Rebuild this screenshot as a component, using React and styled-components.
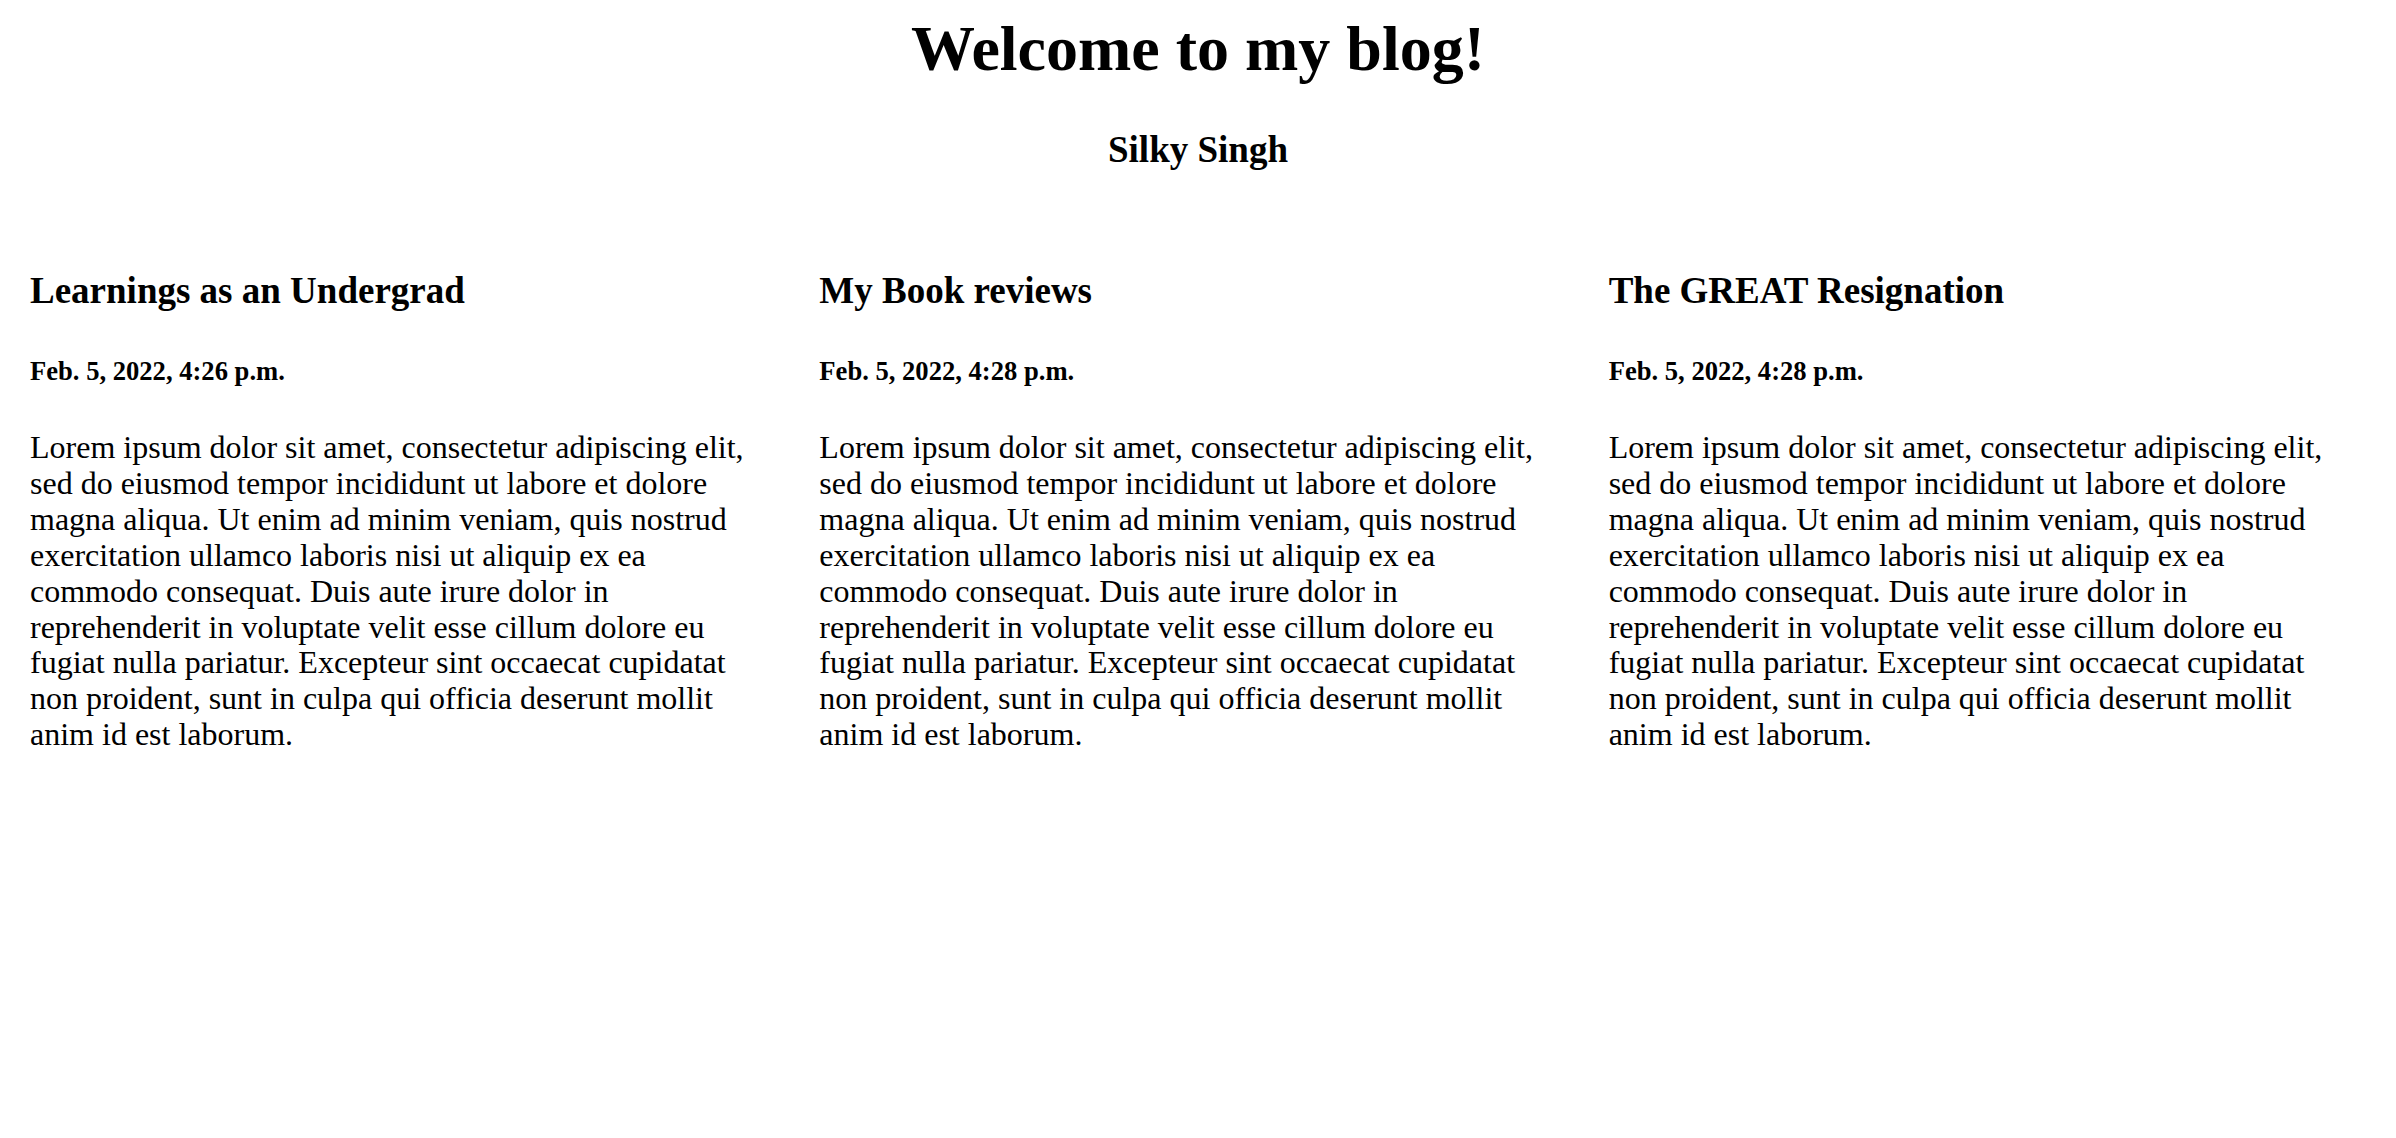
import React from 'react'
import styled, { createGlobalStyle } from 'styled-components'

const GlobalStyle = createGlobalStyle`
  html, body {
    margin: 0;
    padding: 0;
    background: #ffffff;
  }
  body {
    font-family: "Liberation Serif", "Times New Roman", serif;
    color: #000000;
  }
`

const lorem =
  'Lorem ipsum dolor sit amet, consectetur adipiscing elit, sed do eiusmod tempor incididunt ut labore et dolore magna aliqua. Ut enim ad minim veniam, quis nostrud exercitation ullamco laboris nisi ut aliquip ex ea commodo consequat. Duis aute irure dolor in reprehenderit in voluptate velit esse cillum dolore eu fugiat nulla pariatur. Excepteur sint occaecat cupidatat non proident, sunt in culpa qui officia deserunt mollit anim id est laborum.'

const posts = [
  { id: 1, title: 'Learnings as an Undergrad', date: 'Feb. 5, 2022, 4:26 p.m.' },
  { id: 2, title: 'My Book reviews', date: 'Feb. 5, 2022, 4:28 p.m.' },
  { id: 3, title: 'The GREAT Resignation', date: 'Feb. 5, 2022, 4:28 p.m.' },
]

function App() {
  return (
    <Page>
      <GlobalStyle />
      <Header>
        <Title>Welcome to my blog!</Title>
        <Author>Silky Singh</Author>
      </Header>

      <Posts>
        {posts.map((post) => (
          <Post key={post.id}>
            <PostTitle>{post.title}</PostTitle>
            <PostDate>{post.date}</PostDate>
            <PostBody>{lorem}</PostBody>
          </Post>
        ))}
      </Posts>
    </Page>
  )
}

export default App

const Page = styled.div`
  padding-top: 13px;
  min-height: 1125px;
`

const Header = styled.header`
  display: flex;
  flex-direction: column;
  align-items: center;
`

const Title = styled.h1`
  margin: 0;
  font-size: 64px;
  line-height: 72px;
  font-weight: bold;
`

const Author = styled.h3`
  margin: 44px 0 0;
  font-size: 37px;
  line-height: 42px;
  font-weight: bold;
`

const Posts = styled.div`
  display: grid;
  grid-template-columns: repeat(3, 1fr);
  padding: 0 16px 0 12px;
  margin-top: 99px;
`

const Post = styled.article`
  padding: 0 44px 0 18px;
`

const PostTitle = styled.h3`
  margin: 0;
  font-size: 37px;
  line-height: 42px;
  font-weight: bold;
`

const PostDate = styled.h5`
  margin: 44px 0 0;
  font-size: 26.6px;
  line-height: 30px;
  font-weight: bold;
`

const PostBody = styled.p`
  margin: 44px 0 0;
  font-size: 32px;
  line-height: 35.9px;
`
